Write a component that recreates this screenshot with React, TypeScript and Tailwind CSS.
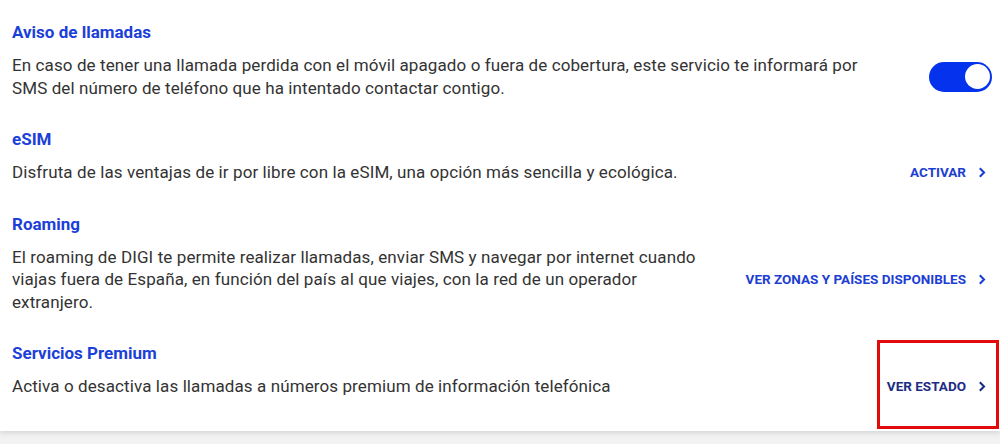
import React, { useState } from 'react'

type Action =
  | { kind: 'toggle' }
  | { kind: 'link'; label: string; tone?: 'blue' | 'navy' }

interface Service {
  id: string
  title: string
  description: string
  action: Action
}

const services: Service[] = [
  {
    id: 'aviso',
    title: 'Aviso de llamadas',
    description:
      'En caso de tener una llamada perdida con el móvil apagado o fuera de cobertura, este servicio te informará por SMS del número de teléfono que ha intentado contactar contigo.',
    action: { kind: 'toggle' }
  },
  {
    id: 'esim',
    title: 'eSIM',
    description:
      'Disfruta de las ventajas de ir por libre con la eSIM, una opción más sencilla y ecológica.',
    action: { kind: 'link', label: 'Activar' }
  },
  {
    id: 'roaming',
    title: 'Roaming',
    description:
      'El roaming de DIGI te permite realizar llamadas, enviar SMS y navegar por internet cuando viajas fuera de España, en función del país al que viajes, con la red de un operador extranjero.',
    action: { kind: 'link', label: 'Ver zonas y países disponibles' }
  },
  {
    id: 'premium',
    title: 'Servicios Premium',
    description:
      'Activa o desactiva las llamadas a números premium de información telefónica',
    action: { kind: 'link', label: 'Ver estado', tone: 'navy' }
  }
]

const Chevron = () => (
  <svg width="8" height="11" viewBox="0 0 8 11" fill="none" aria-hidden="true">
    <path d="M1.8 1.3 6 5.5 1.8 9.7" stroke="currentColor" strokeWidth="2.1" />
  </svg>
)

const Toggle: React.FC<{ on: boolean; onChange: (v: boolean) => void }> = ({ on, onChange }) => (
  <button
    type="button"
    onClick={() => onChange(!on)}
    className={`flex h-[30px] w-[63px] shrink-0 items-center rounded-full px-[2.5px] ${
      on ? 'justify-end bg-[#0532ec]' : 'justify-start bg-[#c4c4c4]'
    }`}
  >
    <span className="h-[25px] w-[25px] rounded-full bg-white" />
  </button>
)

const ServiceRow: React.FC<{ service: Service; on: boolean; onToggle: (v: boolean) => void }> = ({
  service,
  on,
  onToggle
}) => {
  const { action } = service
  return (
    <section>
      <h3 className="text-[17px] leading-[24px] font-bold text-[#1c3fd9]">{service.title}</h3>
      <div className="mt-[10px] flex items-center gap-[40px]">
        <p className="flex-1 text-[17px] leading-[22.5px] tracking-[0.1px] text-[#333333]">
          {service.description}
        </p>
        {action.kind === 'toggle' ? (
          <Toggle on={on} onChange={onToggle} />
        ) : (
          <a
            href="#"
            className={`flex shrink-0 items-center gap-[12px] pr-[6px] text-[13.5px] leading-[16px] font-bold uppercase ${
              action.tone === 'navy' ? 'text-[#1e2d83]' : 'text-[#1d3ed2]'
            }`}
          >
            {action.label}
            <Chevron />
          </a>
        )}
      </div>
    </section>
  )
}

export default function App() {
  const [aviso, setAviso] = useState(true)

  return (
    <div className="min-h-[444px] bg-[#f2f2f2] font-['Roboto','Liberation_Sans',sans-serif]">
      <div className="relative bg-white pl-[12px] pr-[8px] pt-[20px] pb-[33.5px] shadow-[0_2px_5px_rgba(0,0,0,0.12)]">
        <div className="flex flex-col gap-[28px]">
          {services.map(s => (
            <ServiceRow key={s.id} service={s} on={aviso} onToggle={setAviso} />
          ))}
        </div>

        {/* highlight frame over the premium action */}
        <div className="pointer-events-none absolute left-[877px] top-[340px] h-[89px] w-[122px] border-[3px] border-[#e10b0b]" />
      </div>
    </div>
  )
}
